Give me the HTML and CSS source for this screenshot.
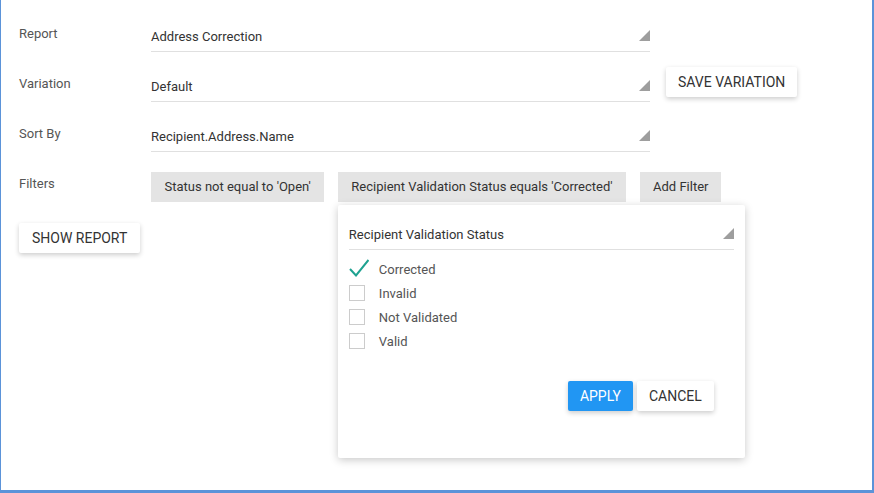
FILE: index.html
```html
<!DOCTYPE html>
<html lang="en">
  <head>
    <meta charset="UTF-8" />
    <title>Report</title>
    <link rel="stylesheet" href="styles.css">
  </head>
  <body>
    <div class="form">
      <!-- Report picker -->
      <div class="row">
        <div class="label">Report</div>
        <div class="select">Address Correction<span class="arrow"></span></div>
      </div>

      <div class="row">
        <div class="label">Variation</div>
        <div class="select">Default<span class="arrow"></span></div>
        <button class="btn save">SAVE VARIATION</button>
      </div>

      <div class="row">
        <div class="label">Sort By</div>
        <div class="select">Recipient.Address.Name<span class="arrow"></span></div>
      </div>

      <!-- Filter chips -->
      <div class="row">
        <div class="label">Filters</div>
        <div class="chips">
          <div class="chip">Status not equal to 'Open'</div>
          <div class="chip-wrap">
            <div class="chip">Recipient Validation Status equals 'Corrected'</div>

            <!-- Open filter editor -->
            <div class="panel">
              <div class="select">Recipient Validation Status<span class="arrow"></span></div>
              <ul class="checklist">
                <li>
                  <svg class="check" width="20" height="18" viewBox="0 0 20 18">
                    <path d="M1 10 L7 16.5 L19.5 1" fill="none" stroke="#1fa291" stroke-width="2"/>
                  </svg>
                  Corrected
                </li>
                <li><span class="box"></span>Invalid</li>
                <li><span class="box"></span>Not Validated</li>
                <li><span class="box"></span>Valid</li>
              </ul>
              <div class="panel-actions">
                <button class="btn primary">APPLY</button>
                <button class="btn">CANCEL</button>
              </div>
            </div>
          </div>
          <div class="chip">Add Filter</div>
        </div>
      </div>

      <button class="btn show">SHOW REPORT</button>
    </div>
  </body>
</html>
```

FILE: styles.css
```css
* {
  margin: 0;
  padding: 0;
  box-sizing: border-box;
  font-family: Roboto, 'Liberation Sans', sans-serif;
}

html,
body {
  height: 100%;
}

/* Blue frame round the page (no top edge) */
body {
  background-color: #fff;
  border-left: 1px solid #5b93d9;
  border-right: 2px solid #5b93d9;
  border-bottom: 3px solid #5b93d9;
  color: #333;
  font-size: 13px;
}

.form {
  padding: 21px 0 0 18px;
}

.row {
  display: grid;
  grid-template-columns: 132px 499px auto;
  align-items: start;
  margin-bottom: 19px;
}

.label {
  color: #555;
  line-height: 26px;
}

/* Underlined select with corner triangle */
.select {
  position: relative;
  height: 31px;
  padding-top: 1px;
  line-height: 30px;
  border-bottom: 1px solid #e0e0e0;
}

.arrow {
  position: absolute;
  right: 0;
  top: 9px;
  width: 0;
  height: 0;
  border-left: 11px solid transparent;
  border-bottom: 11px solid #9e9e9e;
}

.btn {
  height: 30px;
  padding: 0 12px;
  border: none;
  border-radius: 2px;
  background-color: #fff;
  color: #333;
  font-size: 14px;
  box-shadow: 0 2px 5px rgba(0, 0, 0, 0.2);
  cursor: pointer;
}

.save {
  justify-self: start;
  margin: -4px 0 0 16px;
}

.chips {
  grid-column: 2 / 4;
  display: flex;
  gap: 14px;
  margin-top: 1px;
}

.chip {
  height: 30px;
  line-height: 30px;
  padding: 0 13px 0 13.5px;
  background-color: #e4e4e4;
  white-space: nowrap;
}

.chip-wrap {
  position: relative;
}

/* Filter editor popup */
.panel {
  position: absolute;
  top: 33px;
  left: 0;
  width: 407px;
  height: 253px;
  padding: 14px 11px 0;
  background-color: #fff;
  border-radius: 2px;
  box-shadow: 0 2px 8px rgba(0, 0, 0, 0.22);
  z-index: 5;
}

.checklist {
  list-style: none;
  margin-top: 7px;
}

.checklist li {
  display: flex;
  align-items: center;
  height: 24px;
  color: #555;
}

.box {
  width: 16px;
  height: 16px;
  margin-right: 14px;
  border: 1px solid #ccc;
}

.check {
  margin: -2px 10px 0 0;
}

.panel-actions {
  display: flex;
  justify-content: flex-end;
  gap: 4px;
  margin: 28px 20px 0 0;
}

.primary {
  background-color: #2196f3;
  color: #fff;
}

.show {
  margin-top: 2px;
  padding: 0 13px;
}
```
